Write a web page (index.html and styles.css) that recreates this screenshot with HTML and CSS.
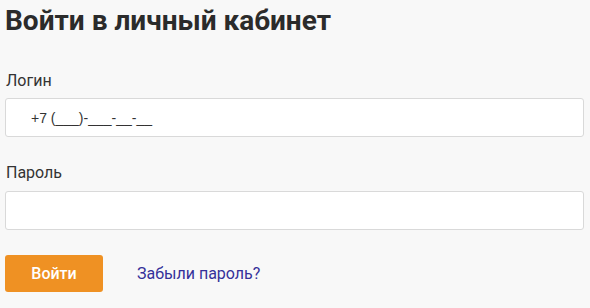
FILE: index.html
```html
<!DOCTYPE html>
<html lang="ru">
<head>
<meta charset="utf-8">
<link rel="stylesheet" href="styles.css">
</head>
<body>
<div class="page">
  <h1 class="title">Войти в личный кабинет</h1>
  <form class="form">
    <label class="field">
      <span class="label">Логин</span>
      <span class="input"><span class="mask">+7 (___)-___-__-__</span></span>
    </label>
    <label class="field">
      <span class="label">Пароль</span>
      <span class="input"></span>
    </label>
    <div class="actions">
      <button type="button" class="btn">Войти</button>
      <a class="link" href="#">Забыли пароль?</a>
    </div>
  </form>
</div>
</body>
</html>
```
FILE: styles.css
```css
html, body {
  margin: 0;
  padding: 0;
  background: #f8f8f8;
}
body {
  font-family: Roboto, "Liberation Sans", sans-serif;
  color: #333;
}
.page {
  padding: 4px 6px 0 5px;
}
.title {
  margin: 0;
  font-size: 28px;
  font-weight: 700;
  line-height: 34px;
  color: #2b2b2b;
}
.form {
  margin-top: 33px;
  display: flex;
  flex-direction: column;
}
.field {
  display: flex;
  flex-direction: column;
  margin-bottom: 26px;
}
.label {
  font-size: 16px;
  line-height: 20px;
  margin-left: 1px;
  margin-bottom: 7px;
  color: #333;
}
.field + .field .label {
  margin-bottom: 8px;
}
.input {
  display: flex;
  align-items: center;
  height: 37px;
  background: #fff;
  border: 1px solid #d9d9d9;
  border-radius: 3px;
  box-sizing: content-box;
}
.mask {
  font-family: "Liberation Sans", Arial, sans-serif;
  font-size: 14px;
  padding-left: 25px;
  color: #333;
}
.actions {
  display: flex;
  align-items: center;
  margin-top: -1px;
}
.btn {
  width: 98px;
  height: 37px;
  border: none;
  border-radius: 3px;
  background: #ef9123;
  color: #fff;
  font-family: Roboto, "Liberation Sans", sans-serif;
  font-size: 16px;
  font-weight: 500;
  padding: 0;
}
.link {
  margin-left: 34px;
  font-size: 16px;
  color: #35319a;
  text-decoration: none;
}
```
